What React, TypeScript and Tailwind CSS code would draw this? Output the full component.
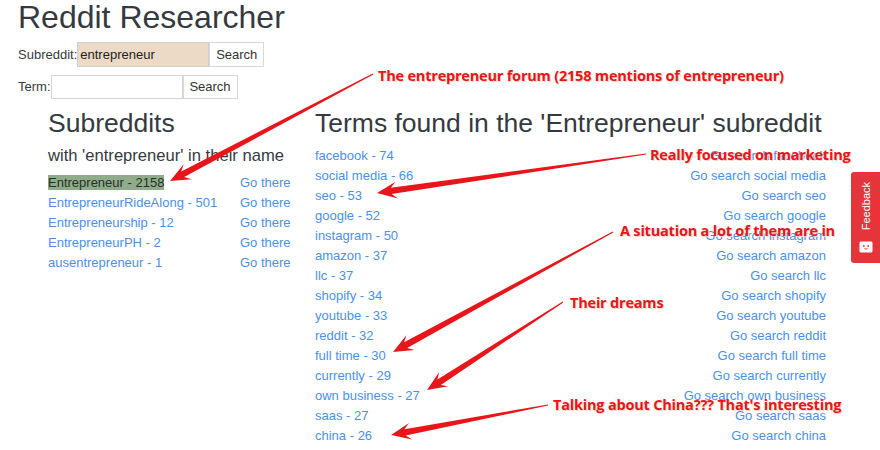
import React from 'react';

const subreddits = [
  { name: 'Entrepreneur', count: 2158, active: true },
  { name: 'EntrepreneurRideAlong', count: 501 },
  { name: 'Entrepreneurship', count: 12 },
  { name: 'EntrepreneurPH', count: 2 },
  { name: 'ausentrepreneur', count: 1 },
];

const terms: [string, number][] = [
  ['facebook', 74],
  ['social media', 66],
  ['seo', 53],
  ['google', 52],
  ['instagram', 50],
  ['amazon', 37],
  ['llc', 37],
  ['shopify', 34],
  ['youtube', 33],
  ['reddit', 32],
  ['full time', 30],
  ['currently', 29],
  ['own business', 27],
  ['saas', 27],
  ['china', 26],
];

// annotation arrows: tail -> tip
const arrows = [
  [373, 74, 170, 181],
  [646, 154, 377, 193],
  [613, 232, 393, 352],
  [563, 302, 427, 390],
  [548, 405, 391, 435],
];

const notes = [
  { text: 'The entrepreneur forum (2158 mentions of entrepreneur)', cls: 'left-[378px] top-[66px]' },
  { text: 'Really focused on marketing', cls: 'left-[650px] top-[145px]' },
  { text: 'A situation a lot of them are in', cls: 'left-[620px] top-[221px]' },
  { text: 'Their dreams', cls: 'left-[570px] top-[293px]' },
  { text: "Talking about China??? That's interesting", cls: 'left-[553px] top-[395px]' },
];

function arrowPoints(x1: number, y1: number, x2: number, y2: number) {
  const dx = x2 - x1;
  const dy = y2 - y1;
  const len = Math.hypot(dx, dy);
  const ux = dx / len;
  const uy = dy / len;
  const nx = -uy;
  const ny = ux;
  const L = 20;
  const H = 8.5;
  const w = 3.2;
  const t = 0.6;
  const bx = x2 - ux * L;
  const by = y2 - uy * L;
  const jx = x2 - ux * L * 0.72;
  const jy = y2 - uy * L * 0.72;
  const pts = [
    [x1 + nx * t, y1 + ny * t],
    [jx + nx * w, jy + ny * w],
    [bx + nx * H, by + ny * H],
    [x2, y2],
    [bx - nx * H, by - ny * H],
    [jx - nx * w, jy - ny * w],
    [x1 - nx * t, y1 - ny * t],
  ];
  return pts.map((p) => p.map((v) => v.toFixed(1)).join(',')).join(' ');
}

export default function App() {
  return (
    <div className="relative w-[880px] h-[450px] overflow-hidden bg-white font-['Liberation_Sans',Arial,sans-serif] text-[#343a40]">
      {/* Header + search forms */}
      <div className="pl-[18px]">
        <h1 className="text-[32px] leading-[34px]">Reddit Researcher</h1>
        <div className="mt-[8px] flex items-center h-[25px] text-[13px]">
          <span>Subreddit:</span>
          <input
            readOnly
            value="entrepreneur"
            className="w-[132px] h-[25px] px-[2px] border border-[#cfcfcf] bg-[#ecdac7] text-[13px] text-[#222] outline-none"
          />
          <button className="w-[55px] h-[25px] border border-[#d8d8d8] bg-white text-[13px] text-[#333]">Search</button>
        </div>
        <div className="mt-[8px] flex items-center h-[24px] text-[13px]">
          <span>Term:</span>
          <input readOnly className="w-[132px] h-[24px] px-[2px] border border-[#d6d6d6] bg-white outline-none" />
          <button className="w-[55px] h-[24px] border border-[#d8d8d8] bg-white text-[13px] text-[#333]">Search</button>
        </div>
      </div>

      {/* Two columns */}
      <div className="mt-[8px] flex pl-[48px]">
        <div className="w-[267px]">
          <h2 className="text-[26.5px] leading-[32px]">Subreddits</h2>
          <h5 className="mt-[6px] text-[16.6px] leading-[22px] whitespace-nowrap">with 'entrepreneur' in their name</h5>
          <div className="mt-[6px] text-[13px]">
            {subreddits.map((s) => (
              <div key={s.name} className="flex h-[20px] leading-[20px]">
                <div className="w-[192px]">
                  {s.active ? (
                    <span className="bg-[#8fac8a] text-[#2b2f2b]">{s.name} - {s.count}</span>
                  ) : (
                    <span className="text-[#4a90ee]">{s.name} - {s.count}</span>
                  )}
                </div>
                <span className="text-[#4a90ee]">Go there</span>
              </div>
            ))}
          </div>
        </div>
        <div className="w-[511px]">
          <h2 className="text-[26.5px] leading-[32px] whitespace-nowrap">Terms found in the 'Entrepreneur' subreddit</h2>
          <div className="mt-[7px] text-[13px] text-[#4a90ee]">
            {terms.map(([t, n]) => (
              <div key={t} className="flex justify-between h-[20px] leading-[20px]">
                <span>{t} - {n}</span>
                <span>Go search {t}</span>
              </div>
            ))}
          </div>
        </div>
      </div>

      {/* Annotation arrows */}
      <svg className="absolute inset-0 pointer-events-none" width="880" height="450" viewBox="0 0 880 450">
        {arrows.map(([a, b, c, d], i) => (
          <polygon key={i} points={arrowPoints(a, b, c, d)} fill="#e8161b" />
        ))}
      </svg>

      {notes.map((n) => (
        <span
          key={n.text}
          className={`absolute ${n.cls} whitespace-nowrap font-['Open_Sans',sans-serif] font-bold text-[14.5px] leading-[20px] tracking-[-0.2px] text-[#e8161b] [text-shadow:1px_1px_0_#f2d5c2]`}
        >
          {n.text}
        </span>
      ))}

      {/* Feedback tab */}
      <div className="absolute left-[851px] top-[172px] w-[29px] h-[91px] rounded-l-[3px] bg-[#e4353b] flex flex-col items-center pt-[10px] pb-[9px]">
        <span className="[writing-mode:vertical-rl] rotate-180 text-[11px] leading-[12px] text-white">Feedback</span>
        <svg className="mt-auto" width="14" height="13" viewBox="0 0 14 13">
          <rect x="0.5" y="0.5" width="13" height="11" rx="1.5" fill="#fff" />
          <circle cx="4.8" cy="5" r="0.9" fill="#e4353b" />
          <circle cx="9.2" cy="5" r="0.9" fill="#e4353b" />
          <path d="M5.5 7.5 Q7 9 8.5 7.5" stroke="#e4353b" strokeWidth="1" fill="none" />
        </svg>
      </div>
    </div>
  );
}
